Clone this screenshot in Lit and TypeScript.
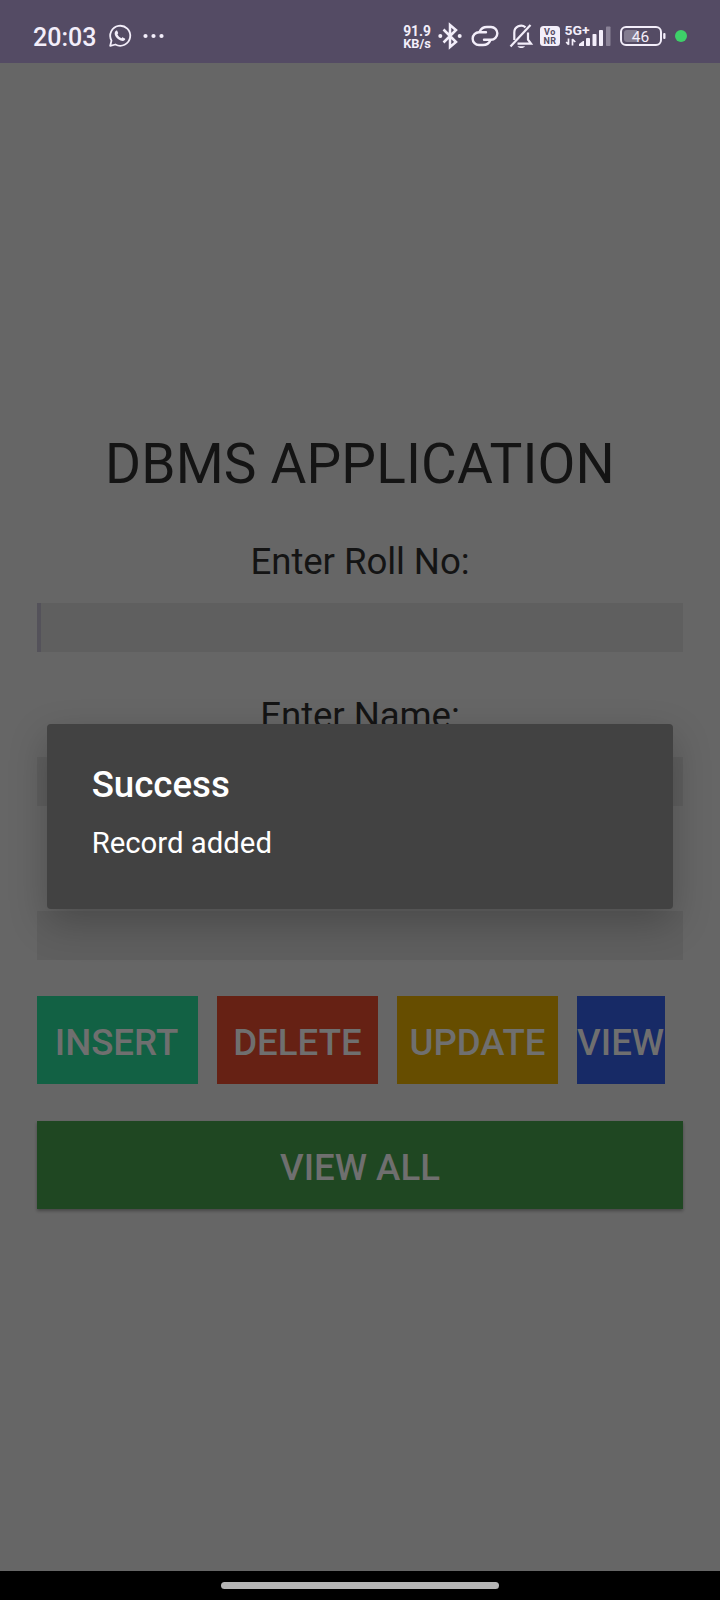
import { LitElement, html, css } from "lit";
import { customElement } from "lit/decorators.js";

@customElement("status-bar")
class StatusBar extends LitElement {
  static styles = css`
    :host {
      display: flex;
      align-items: center;
      height: 63px;
      padding: 9px 33px 0 33px;
      box-sizing: border-box;
      background: #544b64;
      color: #f3eefa;
      font-family: Roboto, sans-serif;
    }
    svg { display: block; flex: none; overflow: visible; }
    .time { font-size: 25px; font-weight: 500; line-height: 30px; width: 75px; padding-top: 3px; white-space: nowrap; }
    .spacer { flex: 1; }
    .left, .right { display: flex; align-items: center; }
    .dots { margin-left: 11px; }
    .rate { width: 28px; padding-top: 3px; font-size: 12.800px; font-weight: 700; line-height: 12.5px; text-align: center; margin-right: 7px; white-space: nowrap; }
    .speed { font-size: 13.800px; }
    .bt { margin-right: 9px; }
    .link { margin-right: 9.500px; }
    .bell { margin-right: 7px; }
    .vonr { margin-right: 5.500px; }
    .signal { margin-right: 9px; }
    .battery { margin-right: 9px; }
    .label { font-family: Roboto, sans-serif; font-weight: 700; }
    .regular { font-family: Roboto, sans-serif; font-weight: 400; }
  `;
  render() {
    return html`
      <div class="left">
        <div class="time">20:03</div>
        <svg width="24" height="24" viewBox="0 0 24 24" fill="none" stroke="#f3eefa">
          <path d="M2.2 21.8 3.5 16.6A10 10 0 1 1 7.4 20.5Z" stroke-width="1.8" stroke-linejoin="round" />
          <path d="M8 6.8c.5-.4 1.1-.3 1.3.2l.9 2c.1.4-.6 1-.8 1.3.8 1.8 2.2 3.2 4.1 4 .4-.3.9-1.100 1.400-.9l2 1c.5.300.3 1.200-.1 1.700-1 1.100-2.600 1.100-4.200.4-2.700-1.200-4.800-3.300-5.700-5.600-.5-1.500-.1-3.200 1.100-4.100Z" fill="#f3eefa" stroke="none" />
        </svg>
        <svg class="dots" width="22" height="6" viewBox="0 0 22 6" fill="#f3eefa">
          <circle cx="2.500" cy="3" r="2.100" /><circle cx="10.500" cy="3" r="2.100" /><circle cx="18.500" cy="3" r="2.100" />
        </svg>
      </div>
      <div class="spacer"></div>
      <div class="right">
        <div class="rate"><span class="speed">91.9</span><br />KB/s</div>
        <svg class="bt" width="24" height="26" viewBox="0 0 24 26" fill="none" stroke="#f3eefa" stroke-width="2.500">
          <path d="M5.500 6.500 18 19l-6 5V2l6 5L5.500 19.500" />
          <circle cx="2.300" cy="13" r="2" fill="#f3eefa" stroke="none" />
          <circle cx="21.700" cy="13" r="2" fill="#f3eefa" stroke="none" />
        </svg>
        <svg class="link" width="28" height="22" viewBox="0 0 28 22" fill="none" stroke="#f3eefa" stroke-width="2.400" stroke-linecap="round">
          <path d="M15 7.300H8A6.350 6.350 0 0 0 8 20H12C15.500 20 18 18.500 19.200 15.500" />
          <path d="M13 14.700H20A6.350 6.350 0 0 0 20 2H16C12.500 2 10 3.500 8.800 6.500" />
        </svg>
        <svg class="bell" width="24" height="26" viewBox="0 0 24 26" fill="none" stroke="#f3eefa" stroke-width="2.200">
          <path d="M5.300 17V9.500A6.800 6.800 0 0 1 16.500 4.300M19 9.500v7.200l3 4H8.500" />
          <path d="M1.500 23.500 21.500 2" />
          <path d="M8.500 23.300h7.500c-1 2.400-6.500 2.400-7.500 0Z" fill="#f3eefa" stroke="none" />
        </svg>
        <svg class="vonr" width="20" height="20" viewBox="0 0 20 20">
          <rect width="20" height="20" rx="3.500" fill="#f3eefa" />
          <text class="label" x="10" y="9.200" font-size="9" letter-spacing=".6" text-anchor="middle" fill="#544b64">Vo</text>
          <text class="label" x="10" y="17.500" font-size="9" letter-spacing=".4" text-anchor="middle" fill="#544b64">NR</text>
        </svg>
        <svg class="signal" width="46" height="24" viewBox="0 0 46 24" fill="#f3eefa">
          <text class="label" x="-.500" y="10.500" font-size="13" textLength="25" lengthAdjust="spacingAndGlyphs">5G+</text>
          <path d="M3.500 14.500V20.800M3.700 20.800 1.200 18M7.500 21.500V15M7.300 15l3 3" fill="none" stroke="#f3eefa" stroke-width="1.700" />
          <path d="M14 22v-2l4-3h1v5Z" />
          <rect x="21" y="14" width="4" height="8" rx=".8" />
          <rect x="27.500" y="10" width="4" height="12" rx=".8" />
          <rect x="34" y="6" width="4" height="16" rx=".8" />
          <rect x="41" y="2.500" width="4.500" height="19.500" rx=".8" opacity=".35" />
        </svg>
        <svg class="battery" width="46" height="20" viewBox="0 0 46 20">
          <rect x="1" y="1" width="40" height="18" rx="5" fill="none" stroke="#f3eefa" stroke-width="2" />
          <path d="M7 4h10v12H7a3 3 0 0 1-3-3V7a3 3 0 0 1 3-3Z" fill="#f3eefa" opacity=".3" />
          <rect x="43.200" y="7" width="2.300" height="6" rx="1" fill="#f3eefa" />
          <text class="regular" x="20.500" y="16" font-size="15.500" text-anchor="middle" fill="#f3eefa">46</text>
        </svg>
        <svg width="12" height="12" viewBox="0 0 12 12"><circle cx="6" cy="6" r="6" fill="#3ed069" /></svg>
      </div>
    `;
  }
}

@customElement("app-root")
class AppRoot extends LitElement {
  static styles = css`
    :host {
      display: flex;
      flex-direction: column;
      position: relative;
      width: 720px;
      height: 1600px;
      overflow: hidden;
      background: #666;
      color: #141414;
      font-family: Roboto, sans-serif;
    }
    .page {
      flex: 1;
      display: flex;
      flex-direction: column;
      padding: 369px 36.67px 0;
    }
    .title { margin: 0; font-size: 55px; font-weight: 400; line-height: 64px; letter-spacing: 0.15px; text-align: center; white-space: nowrap; }
    .field { display: flex; flex-direction: column; gap: 20px; height: 112.300px; margin-top: 41.700px; }
    .field.first { margin-top: 43.700px; }
    .caption { font-size: 36.670px; line-height: 43px; height: 43px; letter-spacing: -0.1px; text-align: center; }
    .input { height: 49.300px; box-sizing: border-box; background: #5f5f5f; }
    .input.focused { border-left: 4px solid #54525a; }
    .buttons { display: flex; gap: 18.330px; margin-top: 36.300px; }
    .button {
      display: flex;
      align-items: center;
      justify-content: center;
      width: 161.670px;
      height: 88px;
      padding-top: 5px;
      box-sizing: border-box;
      font-size: 36.670px;
      font-weight: 500;
      white-space: nowrap;
      color: #6f6f6f;
    }
    .insert { background: #126144; padding-right: 2px; }
    .delete { background: #662114; }
    .update { background: #664d00; }
    .view { background: #172a66; width: 88px; }
    .all { width: auto; margin-top: 36.670px; background: #1f4722; box-shadow: 0 2px 3px rgba(0, 0, 0, 0.3); }
    .dialog {
      position: absolute;
      left: 47.330px;
      top: 724px;
      width: 625.330px;
      height: 185px;
      box-sizing: border-box;
      padding: 39px 44.300px 0;
      border-radius: 4px;
      background: #424242;
      color: #fff;
      box-shadow: 0 14px 38px rgba(0, 0, 0, 0.23);
    }
    .heading { font-size: 36.670px; font-weight: 500; line-height: 44px; }
    .message { margin-top: 19px; font-size: 29.330px; line-height: 34px; }
    .nav { display: flex; justify-content: center; height: 29px; padding-top: 11px; box-sizing: border-box; background: #000; }
    .pill { width: 278px; height: 7px; border-radius: 4px; background: #b5b5b5; }
  `;
  render() {
    return html`
      <status-bar></status-bar>
      <div class="page">
        <h1 class="title">DBMS APPLICATION</h1>
        <div class="field first"><div class="caption">Enter Roll No:</div><div class="input focused"></div></div>
        <div class="field"><div class="caption">Enter Name:</div><div class="input"></div></div>
        <div class="field"><div class="caption"></div><div class="input"></div></div>
        <div class="buttons">
          <div class="button insert">INSERT</div>
          <div class="button delete">DELETE</div>
          <div class="button update">UPDATE</div>
          <div class="button view">VIEW</div>
        </div>
        <div class="button all">VIEW ALL</div>
      </div>
      <div class="nav"><div class="pill"></div></div>
      <div class="dialog">
        <div class="heading">Success</div>
        <div class="message">Record added</div>
      </div>
    `;
  }
}
